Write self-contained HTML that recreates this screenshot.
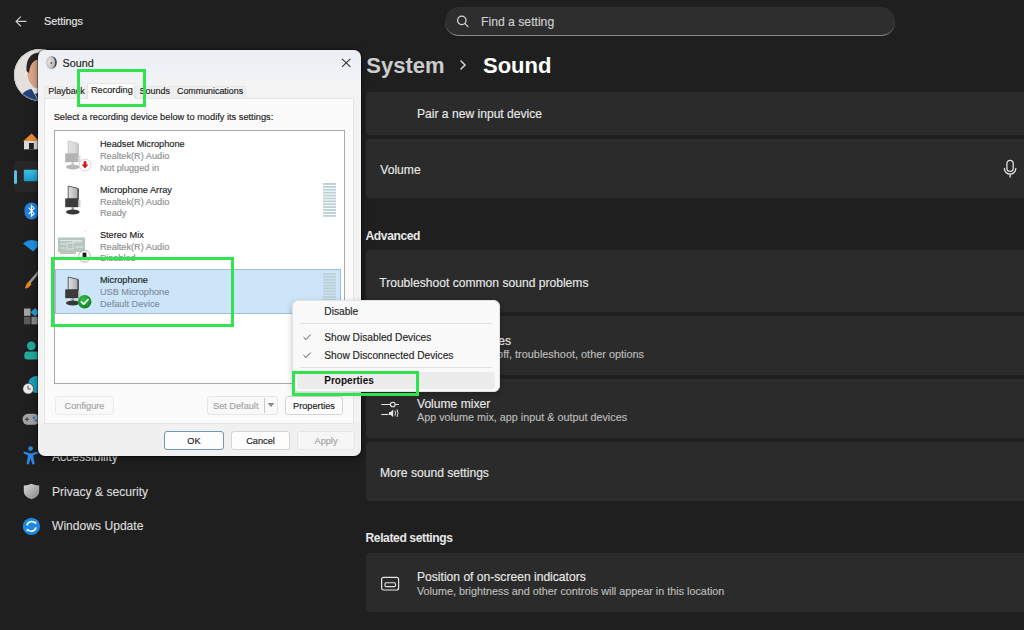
<!DOCTYPE html>
<html><head><meta charset="utf-8">
<style>
*{margin:0;padding:0;box-sizing:border-box}
html,body{width:1024px;height:630px;overflow:hidden;background:#1f1f1f;font-family:"Liberation Sans",sans-serif;position:relative}
.a{position:absolute;white-space:nowrap;line-height:1;-webkit-text-stroke:0.15px currentColor}
.b{position:absolute}
.card{position:absolute;left:366px;width:680px;background:#2b2b2b;border-radius:4px}
</style></head>
<body>
<svg class="b" style="left:14px;top:15px" width="14" height="13" viewBox="0 0 14 13"><path d="M6.6 1.8 L2 6.4 L6.6 11 M2.2 6.4 H12" stroke="#cfcfcf" stroke-width="1.1" fill="none" stroke-linecap="round" stroke-linejoin="round"/></svg>
<div class="a" style="left:44.0px;top:16.3px;font-size:10.8px;color:#e4e4e4;">Settings</div>
<div class="b" style="left:445px;top:7px;width:450px;height:29px;background:#2e2e2e;border-radius:14px;border-bottom:1px solid #8c8c8c"></div>
<svg class="b" style="left:455px;top:14px" width="15" height="15" viewBox="0 0 15 15"><circle cx="6.8" cy="6.4" r="4.2" stroke="#d4d4d4" stroke-width="1.3" fill="none"/><path d="M9.8 9.4 L13 12.6" stroke="#d4d4d4" stroke-width="1.3" stroke-linecap="round"/></svg>
<div class="a" style="left:481.0px;top:15.7px;font-size:12.2px;color:#cfcfcf;">Find a setting</div>
<div class="a" style="left:366.3px;top:54.8px;font-size:22px;color:#cccccc;font-weight:bold;-webkit-text-stroke:0">System</div>
<svg class="b" style="left:458px;top:59px" width="10" height="12" viewBox="0 0 10 12"><path d="M3 2 L7 6 L3 10" stroke="#d8d8d8" stroke-width="1.5" fill="none" stroke-linecap="round"/></svg>
<div class="a" style="left:483.0px;top:54.8px;font-size:22px;color:#ffffff;font-weight:bold;-webkit-text-stroke:0">Sound</div>
<div class="b" style="left:14px;top:49px;width:52px;height:52px;border-radius:50%;background:#e3dfdc;overflow:hidden"></div>
<div class="b" style="left:14px;top:161px;width:220px;height:31px;background:#272727;border-radius:4px"></div>
<div class="b" style="left:14px;top:169.5px;width:3px;height:14px;background:#5cbde9;border-radius:2px"></div>
<svg class="b" style="left:22px;top:132px" width="18" height="18" viewBox="0 0 18 18"><path d="M1 9.2 L9.6 1.4 L17.5 9.2 Z" fill="#e88a35"/><rect x="2" y="9" width="14.5" height="8.3" fill="#d9d9d9"/><rect x="7" y="11" width="4.8" height="6.3" fill="#1f1f1f"/></svg>
<svg class="b" style="left:23px;top:169px" width="16" height="13" viewBox="0 0 16 13"><defs><linearGradient id="mon" x1="0" y1="0" x2="0" y2="1"><stop offset="0" stop-color="#3cc0e0"/><stop offset="1" stop-color="#1b95c8"/></linearGradient></defs><rect x="0.8" y="0.8" width="15" height="11.5" rx="1" fill="url(#mon)"/></svg>
<svg class="b" style="left:24px;top:202px" width="16" height="18" viewBox="0 0 16 18"><rect x="0.5" y="0.5" width="14" height="17" rx="7" fill="#1f7fe0"/><path d="M4.6 5.6 L10.2 11.6 L7.4 14.2 V3.6 L10.2 6.2 L4.6 12.2" stroke="#fff" stroke-width="1.1" fill="none"/></svg>
<svg class="b" style="left:22px;top:238px" width="18" height="14" viewBox="0 0 18 14"><path d="M1 5.4 Q10 -1.5 19 5.4 L11 13.5 Z" fill="#1e8fe0"/></svg>
<svg class="b" style="left:23px;top:268px" width="17" height="22" viewBox="0 0 17 22"><path d="M7 14 L16.5 3" stroke="#9a9a9a" stroke-width="2.6" stroke-linecap="round"/><path d="M2 20.5 Q3 15 6.2 13.4 Q8.5 14.5 8.2 16.5 Q5.5 20.3 2 20.5 Z" fill="#e8861c"/></svg>
<svg class="b" style="left:24px;top:308px" width="16" height="17" viewBox="0 0 16 17"><rect x="0" y="0.5" width="6.5" height="7.3" fill="#a2a2a2"/><rect x="0" y="8.8" width="6.5" height="7.5" fill="#5a5a5a"/><rect x="7.5" y="8.8" width="7" height="7.5" fill="#8a8a8a"/><path d="M11 0 L15.5 4.3 L11 8.6 L6.5 4.3 Z" fill="#2a9ad8"/></svg>
<svg class="b" style="left:24px;top:341px" width="16" height="19" viewBox="0 0 16 19"><circle cx="7.3" cy="4.8" r="4.4" fill="#20a89a"/><path d="M0.3 14 Q0.3 10.6 3.5 10.6 H12 Q15.5 10.6 15.5 14 V16 Q15.5 18.4 12.5 18.4 H3.3 Q0.3 18.4 0.3 16 Z" fill="#20a89a"/></svg>
<svg class="b" style="left:21px;top:375px" width="20" height="20" viewBox="0 0 20 20"><circle cx="15.5" cy="9.5" r="8.5" fill="#1c9fb5"/><circle cx="7.2" cy="13.7" r="5.4" fill="#e8e8e8" stroke="#1f1f1f" stroke-width="0.6"/><path d="M7 10.6 V14 H9.6" stroke="#555" stroke-width="1" fill="none"/></svg>
<svg class="b" style="left:22px;top:413px" width="18" height="13" viewBox="0 0 18 13"><rect x="0.5" y="0.8" width="17" height="11" rx="5.5" fill="#a3a3a3"/><path d="M3 6.3 H7 M5 4.3 V8.3" stroke="#4a4a4a" stroke-width="1.2"/><circle cx="12" cy="4.8" r="1.2" fill="#4270c8"/><circle cx="14" cy="7.5" r="1.2" fill="#4270c8"/></svg>
<svg class="b" style="left:23px;top:446px" width="16" height="19" viewBox="0 0 16 19"><circle cx="7.6" cy="2.6" r="2.3" fill="#2a88e0"/><path d="M0.8 5.5 L7.6 7.4 L14.6 5.5 L14.8 7.5 L10.2 9.2 L11.6 18 L9.4 18.4 L7.6 12.6 L5.8 18.4 L3.6 18 L5 9.2 L0.6 7.5 Z" fill="#2a88e0"/></svg>
<svg class="b" style="left:23px;top:483px" width="17" height="17" viewBox="0 0 17 17"><defs><linearGradient id="shg" x1="0" y1="0" x2="1" y2="1"><stop offset="0" stop-color="#d8d8d8"/><stop offset="1" stop-color="#858585"/></linearGradient></defs><path d="M8.5 0.8 Q12.5 2.8 16.2 2.6 V8.4 Q16 13.8 8.5 16.2 Q1 13.8 0.8 8.4 V2.6 Q4.5 2.8 8.5 0.8 Z" fill="url(#shg)"/></svg>
<svg class="b" style="left:22px;top:517px" width="19" height="19" viewBox="0 0 19 19"><circle cx="9.4" cy="9.4" r="8.6" fill="#1e88e0"/><path d="M5 8.4 A4.6 4.6 0 0 1 13.2 6.4 M14 10.4 A4.6 4.6 0 0 1 5.8 12.4" stroke="#fff" stroke-width="1.5" fill="none"/><path d="M11.6 5 L14.2 7.2 L14.4 4.4 Z M7.4 13.8 L4.8 11.6 L4.6 14.4 Z" fill="#fff"/></svg>
<svg class="b" style="left:14px;top:49px" width="52" height="52" viewBox="0 0 52 52"><defs><clipPath id="avc"><circle cx="26" cy="26" r="26"/></clipPath></defs><g clip-path="url(#avc)"><rect width="52" height="52" fill="#e4e0dd"/><ellipse cx="25" cy="24" rx="11.5" ry="15.5" fill="#d9a487"/><path d="M12.5 22 Q11.5 4 26 3.5 Q38 4 39 16 L39 12 Q33 9 26 10 Q16 11 15 24 Z" fill="#2b2422"/><path d="M4 52 L9 44 Q14 40 18 40 L24 52 Z" fill="#24427a"/><path d="M17 39 L25 52 L33 39 Z" fill="#f0f0f0"/><path d="M21 45 L25 52 L24 44 Z" fill="#33405a"/></g><circle cx="26" cy="26" r="25.6" fill="none" stroke="#bdbdbd" stroke-width="0.6"/></svg>
<div class="a" style="left:52.0px;top:451.2px;font-size:12.1px;color:#dcdcdc;">Accessibility</div>
<div class="a" style="left:52.0px;top:485.5px;font-size:12.1px;color:#dcdcdc;">Privacy &amp; security</div>
<div class="a" style="left:52.0px;top:520.4px;font-size:12.1px;color:#dcdcdc;">Windows Update</div>
<div class="card" style="top:92px;height:43px"></div>
<div class="a" style="left:417.0px;top:107.8px;font-size:12.1px;color:#e8e8e8;">Pair a new input device</div>
<div class="card" style="top:139px;height:59px"></div>
<div class="a" style="left:380.3px;top:164.3px;font-size:12.1px;color:#e8e8e8;">Volume</div>
<div class="a" style="left:365.5px;top:229.8px;font-size:12.1px;color:#e8e8e8;font-weight:bold;letter-spacing:-0.4px;-webkit-text-stroke:0">Advanced</div>
<div class="card" style="top:250px;height:62px"></div>
<div class="a" style="left:379.2px;top:276.8px;font-size:12.1px;color:#e8e8e8;">Troubleshoot common sound problems</div>
<div class="card" style="top:316px;height:59px"></div>
<div class="a" style="left:417.0px;top:334.5px;font-size:12.1px;color:#e8e8e8;">All sound devices</div>
<div class="a" style="left:417.0px;top:349.2px;font-size:10.9px;color:#bdbdbd;">Turn devices on/off, troubleshoot, other options</div>
<div class="card" style="top:379px;height:59px"></div>
<div class="a" style="left:417.0px;top:397.5px;font-size:12.1px;color:#e8e8e8;">Volume mixer</div>
<div class="a" style="left:417.0px;top:412.2px;font-size:10.8px;color:#bdbdbd;">App volume mix, app input &amp; output devices</div>
<div class="card" style="top:442px;height:59px"></div>
<div class="a" style="left:380.0px;top:466.8px;font-size:12.1px;color:#e8e8e8;">More sound settings</div>
<div class="a" style="left:365.5px;top:532.3px;font-size:12.1px;color:#e8e8e8;font-weight:bold;letter-spacing:-0.4px;-webkit-text-stroke:0">Related settings</div>
<div class="card" style="top:553px;height:59px"></div>
<div class="a" style="left:417.0px;top:571.3px;font-size:12.1px;color:#e8e8e8;">Position of on-screen indicators</div>
<div class="a" style="left:417.0px;top:586.4px;font-size:10.8px;color:#bdbdbd;">Volume, brightness and other controls will appear in this location</div>
<svg class="b" style="left:1002px;top:158px" width="16" height="21" viewBox="0 0 16 21"><rect x="4.9" y="2.4" width="6.3" height="11" rx="3.15" stroke="#e0e0e0" stroke-width="1.3" fill="none"/><path d="M2.4 10.4 A5.7 5.7 0 0 0 13.8 10.4 M8.1 16.4 V19" stroke="#e0e0e0" stroke-width="1.3" fill="none" stroke-linecap="round"/></svg>
<svg class="b" style="left:380px;top:400px" width="20" height="18" viewBox="0 0 20 18"><path d="M1.3 4.5 H10.3 M15.3 4.5 H19" stroke="#e6e6e6" stroke-width="1.1"/><circle cx="12.8" cy="4.5" r="2.3" stroke="#e6e6e6" stroke-width="1.1" fill="none"/><path d="M1.3 14.5 H8.5" stroke="#e6e6e6" stroke-width="1.1"/><path d="M9 13 H10.6 L13.2 10.6 V18 L10.6 15.9 H9 Z" fill="#e6e6e6" transform="translate(0,-1)"/><path d="M15 11.6 Q16.2 14.2 15 16.6 M17 10.4 Q19 14.2 17 18" stroke="#e6e6e6" stroke-width="1" fill="none" transform="translate(0,-1)"/></svg>
<svg class="b" style="left:380px;top:576px" width="20" height="16" viewBox="0 0 20 16"><rect x="1.6" y="1.4" width="17" height="12.6" rx="2" stroke="#e4e4e4" stroke-width="1.2" fill="none"/><rect x="5" y="6.8" width="10.5" height="3.8" rx="1" stroke="#e4e4e4" stroke-width="1.1" fill="none"/></svg>
<div class="b" style="left:38px;top:50px;width:323px;height:406px;background:linear-gradient(180deg,#ecf0f6 0px,#eef2f6 20px,#f1f3f5 30px,#f3f3f3 36px,#f3f3f3 370px,#f0f0f0 375px);border-radius:7px;box-shadow:0 0 0 1px rgba(0,0,0,.35),0 2px 7px rgba(0,0,0,.45)"></div>
<div class="b" style="left:44px;top:86px;width:43px;height:13px;background:#f0f0f0;border:1px solid #e9e9e9;border-bottom:none"></div>
<div class="b" style="left:135px;top:86px;width:39px;height:13px;background:#f0f0f0;border:1px solid #e9e9e9;border-bottom:none"></div>
<div class="b" style="left:173px;top:86px;width:73px;height:13px;background:#f0f0f0;border:1px solid #e9e9e9;border-bottom:none"></div>
<div class="b" style="left:44px;top:98px;width:310px;height:326px;background:#fbfbfb;border:1px solid #e6e6e6"></div>
<div class="b" style="left:87px;top:83px;width:48px;height:16px;background:#fbfbfb;border:1px solid #e6e6e6;border-bottom:none"></div>
<div class="a" style="left:62.5px;top:57.9px;font-size:10.8px;color:#1b1b1b;">Sound</div>
<div class="a" style="left:48.2px;top:87.3px;font-size:9.0px;color:#1b1b1b;">Playback</div>
<div class="a" style="left:90.9px;top:86.2px;font-size:9.2px;color:#1b1b1b;">Recording</div>
<div class="a" style="left:139.5px;top:87.3px;font-size:9.0px;color:#1b1b1b;">Sounds</div>
<div class="a" style="left:177.0px;top:87.4px;font-size:8.9px;color:#1b1b1b;">Communications</div>
<div class="a" style="left:53.7px;top:112.7px;font-size:9.25px;color:#1b1b1b;">Select a recording device below to modify its settings:</div>
<svg class="b" style="left:340px;top:57px" width="12" height="12" viewBox="0 0 12 12"><path d="M2 1.8 L10.4 9.8 M10.4 1.8 L2 9.8" stroke="#2e2e2e" stroke-width="1.05"/></svg>
<div class="b" style="left:54px;top:130px;width:291px;height:254px;background:#ffffff;border:1px solid #a9a9a9"></div>
<div class="b" style="left:55px;top:269px;width:286px;height:45px;background:#cce5f9;border:1px solid #9dbfdc"></div>
<div class="a" style="left:99.9px;top:140.4px;font-size:9.2px;color:#1b1b1b;">Headset Microphone</div>
<div class="a" style="left:99.9px;top:152.2px;font-size:9.2px;color:#8f8f8f;">Realtek(R) Audio</div>
<div class="a" style="left:99.9px;top:164.0px;font-size:9.2px;color:#8f8f8f;">Not plugged in</div>
<div class="a" style="left:99.9px;top:185.7px;font-size:9.2px;color:#1b1b1b;">Microphone Array</div>
<div class="a" style="left:99.9px;top:197.5px;font-size:9.2px;color:#8f8f8f;">Realtek(R) Audio</div>
<div class="a" style="left:99.9px;top:209.3px;font-size:9.2px;color:#8f8f8f;">Ready</div>
<div class="a" style="left:99.9px;top:230.8px;font-size:9.2px;color:#1b1b1b;">Stereo Mix</div>
<div class="a" style="left:99.9px;top:242.6px;font-size:9.2px;color:#8f8f8f;">Realtek(R) Audio</div>
<div class="a" style="left:99.9px;top:254.4px;font-size:9.2px;color:#8f8f8f;">Disabled</div>
<div class="a" style="left:99.9px;top:276.2px;font-size:9.2px;color:#1b1b1b;">Microphone</div>
<div class="a" style="left:99.9px;top:288.0px;font-size:9.2px;color:#7f8f9f;">USB Microphone</div>
<div class="a" style="left:99.9px;top:299.8px;font-size:9.2px;color:#7f8f9f;">Default Device</div>
<svg class="b" style="left:45px;top:55px" width="13" height="15" viewBox="0 0 13 15"><defs><radialGradient id="sg" cx="0.4" cy="0.45" r="0.65"><stop offset="0" stop-color="#e4e4e4"/><stop offset="0.7" stop-color="#c2c2c2"/><stop offset="1" stop-color="#9a9a9a"/></radialGradient></defs><path d="M6 1.2 Q11.8 1.5 11.8 7.6 Q11.6 13.6 6 13.8 Z" fill="#3c4444"/><ellipse cx="5.6" cy="7.5" rx="4.6" ry="6.3" fill="url(#sg)"/><ellipse cx="6.4" cy="8" rx="1" ry="1.3" fill="#6a6a6a"/></svg>
<svg class="b" style="left:64px;top:140px" width="18" height="30" viewBox="0 0 18 30"><defs><linearGradient id="mh64140" x1="0" x2="1"><stop offset="0" stop-color="#e6e6e6"/><stop offset="1" stop-color="#cfcfcf"/></linearGradient></defs><path d="M4.2 1 L14.2 3.4 L14.2 14 L4.2 14 Z" fill="url(#mh64140)" stroke="#bdbdbd" stroke-width="0.8"/><path d="M13.6 3.4 L14.6 4 L14.6 14 L13.6 14 Z" fill="#bdbdbd"/><path d="M1.2 13.4 L14.6 13.4 L14.6 22.2 L1.2 22.2 Z" fill="#b3b3b3"/><rect x="14.5" y="15" width="2" height="7" fill="#dcdcdc"/><rect x="7.6" y="22" width="2.4" height="4" fill="#d0d0d0"/><ellipse cx="8.8" cy="27" rx="6.8" ry="2.5" fill="#b8b8b8"/></svg>
<svg class="b" style="left:64px;top:185px" width="18" height="30" viewBox="0 0 18 30"><defs><linearGradient id="mh64185" x1="0" x2="1"><stop offset="0" stop-color="#e2e2e2"/><stop offset="1" stop-color="#a8a8a8"/></linearGradient></defs><path d="M4.2 1 L14.2 3.4 L14.2 14 L4.2 14 Z" fill="url(#mh64185)" stroke="#3c3c3c" stroke-width="0.8"/><path d="M13.6 3.4 L14.6 4 L14.6 14 L13.6 14 Z" fill="#3c3c3c"/><path d="M1.2 13.4 L14.6 13.4 L14.6 22.2 L1.2 22.2 Z" fill="#3b3b3b"/><rect x="14.5" y="15" width="2" height="7" fill="#cfcfcf"/><rect x="7.6" y="22" width="2.4" height="4" fill="#9a9a9a"/><ellipse cx="8.8" cy="27" rx="6.8" ry="2.5" fill="#383838"/></svg>
<svg class="b" style="left:64px;top:276px" width="18" height="30" viewBox="0 0 18 30"><defs><linearGradient id="mh64276" x1="0" x2="1"><stop offset="0" stop-color="#e2e2e2"/><stop offset="1" stop-color="#a8a8a8"/></linearGradient></defs><path d="M4.2 1 L14.2 3.4 L14.2 14 L4.2 14 Z" fill="url(#mh64276)" stroke="#3c3c3c" stroke-width="0.8"/><path d="M13.6 3.4 L14.6 4 L14.6 14 L13.6 14 Z" fill="#3c3c3c"/><path d="M1.2 13.4 L14.6 13.4 L14.6 22.2 L1.2 22.2 Z" fill="#3b3b3b"/><rect x="14.5" y="15" width="2" height="7" fill="#cfcfcf"/><rect x="7.6" y="22" width="2.4" height="4" fill="#9a9a9a"/><ellipse cx="8.8" cy="27" rx="6.8" ry="2.5" fill="#383838"/></svg>
<svg class="b" style="left:78px;top:158px" width="14" height="14" viewBox="0 0 14 14"><circle cx="7" cy="7" r="5.9" fill="#fff" stroke="#c9c9c9" stroke-width="0.8"/><path d="M5.6 3.2 H8.4 V6.6 H10.4 L7 10.6 L3.6 6.6 H5.6 Z" fill="#d7141b"/></svg>
<svg class="b" style="left:57px;top:230px" width="32" height="26" viewBox="0 0 32 26"><path d="M27.5 2 L28.5 0.5" stroke="#c8d0cc" stroke-width="0.8"/><rect x="1" y="7.5" width="27" height="14.5" fill="#b6c6bf"/><rect x="3" y="22" width="16" height="2" fill="#c9c2b2"/><path d="M3 10.5 H25 M3 14 H9 M15 12 H25 M4 18 H8 M18 17 H26" stroke="#dfe8e4" stroke-width="1" /><rect x="10" y="13" width="6" height="6" fill="none" stroke="#dfe8e4" stroke-width="0.9"/></svg>
<svg class="b" style="left:78px;top:250px" width="14" height="14" viewBox="0 0 14 14"><circle cx="6.5" cy="6.3" r="5.9" fill="#fff" stroke="#8e8e8e" stroke-width="0.7"/><rect x="4.6" y="2.6" width="3.8" height="4.6" fill="#1a1a1a"/><path d="M3.8 7 H9.2 L6.5 9.4 Z" fill="#1a1a1a"/></svg>
<svg class="b" style="left:77px;top:294px" width="16" height="16" viewBox="0 0 16 16"><defs><radialGradient id="gc" cx="0.4" cy="0.35" r="0.7"><stop offset="0" stop-color="#36c04a"/><stop offset="1" stop-color="#0d7f22"/></radialGradient></defs><circle cx="7.6" cy="7.7" r="6.8" fill="url(#gc)"/><path d="M4.3 7.9 L6.7 10.2 L11 5.6" stroke="#fff" stroke-width="1.6" fill="none" stroke-linecap="round" stroke-linejoin="round"/></svg>
<svg class="b" style="left:323px;top:183px" width="13" height="34" viewBox="0 0 13 34"><rect x="0" y="0.00" width="13" height="1.9" fill="#bcd2d6"/><rect x="0" y="2.90" width="13" height="1.9" fill="#bcd2d6"/><rect x="0" y="5.80" width="13" height="1.9" fill="#bcd2d6"/><rect x="0" y="8.70" width="13" height="1.9" fill="#bcd2d6"/><rect x="0" y="11.60" width="13" height="1.9" fill="#bcd2d6"/><rect x="0" y="14.50" width="13" height="1.9" fill="#bcd2d6"/><rect x="0" y="17.40" width="13" height="1.9" fill="#bcd2d6"/><rect x="0" y="20.30" width="13" height="1.9" fill="#bcd2d6"/><rect x="0" y="23.20" width="13" height="1.9" fill="#bcd2d6"/><rect x="0" y="26.10" width="13" height="1.9" fill="#bcd2d6"/><rect x="0" y="29.00" width="13" height="1.9" fill="#bcd2d6"/><rect x="0" y="31.90" width="13" height="1.9" fill="#bcd2d6"/></svg>
<svg class="b" style="left:323px;top:273px" width="13" height="33" viewBox="0 0 13 33"><rect x="0" y="0.00" width="13" height="1.9" fill="#bcd2d6"/><rect x="0" y="2.90" width="13" height="1.9" fill="#bcd2d6"/><rect x="0" y="5.80" width="13" height="1.9" fill="#bcd2d6"/><rect x="0" y="8.70" width="13" height="1.9" fill="#bcd2d6"/><rect x="0" y="11.60" width="13" height="1.9" fill="#bcd2d6"/><rect x="0" y="14.50" width="13" height="1.9" fill="#bcd2d6"/><rect x="0" y="17.40" width="13" height="1.9" fill="#bcd2d6"/><rect x="0" y="20.30" width="13" height="1.9" fill="#bcd2d6"/><rect x="0" y="23.20" width="13" height="1.9" fill="#bcd2d6"/><rect x="0" y="26.10" width="13" height="1.9" fill="#bcd2d6"/><rect x="0" y="29.00" width="13" height="1.9" fill="#bcd2d6"/><rect x="0" y="31.90" width="13" height="1.9" fill="#bcd2d6"/></svg>
<div class="b" style="left:55px;top:396px;width:59px;height:19px;background:#f9f9f9;border:1px solid #ececec;border-radius:3px"></div>
<div class="a" style="left:55px;width:59px;text-align:center;top:401.6px;font-size:9.2px;color:#a3a3a3">Configure</div>
<div class="b" style="left:207px;top:396px;width:71px;height:19px;background:#f9f9f9;border:1px solid #e6e6e6;border-radius:3px"></div>
<div class="a" style="left:207px;width:71px;text-align:center;top:401.6px;font-size:9.2px;color:#a3a3a3"></div>
<div class="a" style="left:213.0px;top:401.7px;font-size:9.2px;color:#a3a3a3;">Set Default</div>
<div class="b" style="left:264px;top:398px;width:1px;height:15px;background:#c8c8c8"></div>
<svg class="b" style="left:267px;top:402px" width="8" height="6" viewBox="0 0 8 6"><path d="M0.5 1 L7.5 1 L4 5 Z" fill="#8a8a8a"/></svg>
<div class="b" style="left:285px;top:396px;width:58px;height:19px;background:#fdfdfd;border:1px solid #d4d4d4;border-radius:3px"></div>
<div class="a" style="left:285px;width:58px;text-align:center;top:401.6px;font-size:9.2px;color:#1b1b1b">Properties</div>
<div class="b" style="left:164px;top:431px;width:60px;height:19px;background:#fdfdfd;border:1px solid #6f98b3;border-radius:3px"></div>
<div class="a" style="left:164px;width:60px;text-align:center;top:436.6px;font-size:9.2px;color:#1b1b1b">OK</div>
<div class="b" style="left:231px;top:431px;width:59px;height:19px;background:#fdfdfd;border:1px solid #d4d4d4;border-radius:3px"></div>
<div class="a" style="left:231px;width:59px;text-align:center;top:436.6px;font-size:9.2px;color:#1b1b1b">Cancel</div>
<div class="b" style="left:297px;top:431px;width:58px;height:19px;background:#f6f6f6;border:1px solid #e6e6e6;border-radius:3px"></div>
<div class="a" style="left:297px;width:58px;text-align:center;top:436.6px;font-size:9.2px;color:#a3a3a3">Apply</div>
<div class="b" style="left:292px;top:300px;width:208px;height:92px;background:#f9f9f9;border:1px solid #e2e2e2;border-radius:6px;box-shadow:0 2px 6px rgba(0,0,0,.22)"></div>
<div class="a" style="left:324.3px;top:307.1px;font-size:10.2px;color:#262626;">Disable</div>
<div class="b" style="left:300px;top:323px;width:192px;height:1px;background:#e0e0e0"></div>
<div class="a" style="left:324.3px;top:332.7px;font-size:10.2px;color:#262626;">Show Disabled Devices</div>
<div class="a" style="left:324.3px;top:350.7px;font-size:10.2px;color:#262626;">Show Disconnected Devices</div>
<svg class="b" style="left:302px;top:331.8px" width="10" height="10" viewBox="0 0 10 10"><path d="M1.5 5.2 L4 7.6 L8.6 2.6" stroke="#555" stroke-width="1" fill="none"/></svg>
<svg class="b" style="left:302px;top:350.0px" width="10" height="10" viewBox="0 0 10 10"><path d="M1.5 5.2 L4 7.6 L8.6 2.6" stroke="#555" stroke-width="1" fill="none"/></svg>
<div class="b" style="left:300px;top:367px;width:192px;height:1px;background:#e0e0e0"></div>
<div class="b" style="left:297px;top:372px;width:198px;height:17px;background:#ececec;border-radius:3px"></div>
<div class="a" style="left:324.3px;top:376.3px;font-size:10.0px;color:#111;font-weight:bold;-webkit-text-stroke:0">Properties</div>
<div class="b" style="left:76.5px;top:68.7px;width:69.30000000000001px;height:38.5px;border:3.5px solid #30e450"></div>
<div class="b" style="left:51px;top:257.3px;width:183.2px;height:69.39999999999998px;border:3.5px solid #30e450"></div>
<div class="b" style="left:292px;top:371.2px;width:126.60000000000002px;height:24.400000000000034px;border:3.5px solid #30e450"></div>
</body></html>
